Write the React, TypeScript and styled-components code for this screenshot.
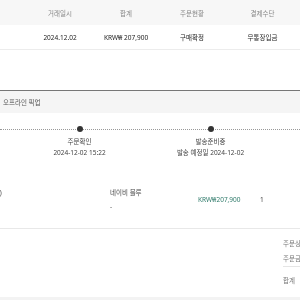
import {createGlobalStyle} from 'styled-components';
import styled from 'styled-components';

const GlobalStyle = createGlobalStyle`
	html, body {
		margin: 0;
		padding: 0;
		background: #fff;
		overflow: hidden;
	}
	body {
		font-family: 'Noto Sans', 'Noto Sans CJK KR', sans-serif;
		font-size: 6.5px;
		color: #333;
	}
`;

// own layer without an opaque background, so text gets grayscale antialiasing
const Page = styled.div`
	width: 300px;
	height: 300px;
	overflow: hidden;
	display: flex;
	flex-direction: column;
	will-change: transform;
`;

const TableRow = styled.div<{$head?: boolean}>`
	display: grid;
	grid-template-columns: 27px 66px 66px 66px 75px;
	align-items: center;
	height: ${p => (p.$head ? '25px' : '24px')};
	background: ${p => (p.$head ? '#f7f7f7' : 'transparent')};
	color: ${p => (p.$head ? '#888' : '#222')};
	border-bottom: ${p => (p.$head ? 'none' : '1px solid #ececec')};
`;

const Cell = styled.div`
	text-align: center;
	white-space: nowrap;
`;

const Section = styled.section`
	margin-top: 40px;
	border-top: 1px solid #777;
`;

const SectionTitle = styled.div`
	height: 22px;
	display: flex;
	align-items: center;
	padding-left: 3px;
	background: #f5f5f5;
	color: #555;
`;

const Timeline = styled.div`
	position: relative;
	display: flex;
	padding: 13px 0 0 14px;
	height: 38px;
`;

const Track = styled.div`
	position: absolute;
	left: 0;
	right: 0;
	top: 16px;
	border-top: 1px dotted #999;
`;

const Step = styled.div`
	position: relative;
	width: 131px;
	display: flex;
	flex-direction: column;
	align-items: center;
	color: #444;
`;

const Dot = styled.span`
	width: 6px;
	height: 6px;
	border-radius: 50%;
	background: #333;
	margin-bottom: 4px;
`;

const StepLabel = styled.div`
	line-height: 11px;
	white-space: nowrap;
`;

const ProductRow = styled.div`
	display: grid;
	grid-template-columns: 110px 88px 62px 1fr;
	align-items: center;
	height: 58px;
	margin-top: 6px;
	border-bottom: 1px solid #e8e8e8;
	color: #444;
`;

const Option = styled.div`
	display: flex;
	flex-direction: column;
	gap: 5px;
	padding-bottom: 1px;
`;

const NameTail = styled.div`
	margin-left: -4px;
	margin-top: -14px;
`;

const Price = styled.div`
	color: #2f7a6a;
`;

const Summary = styled.div`
	display: flex;
	flex-direction: column;
	padding: 7px 0 0 283px;
	color: #777;
	white-space: nowrap;
`;

const SummaryLine = styled.div<{$rule?: boolean}>`
	line-height: 15px;
	${p => (p.$rule ? 'border-bottom: 1px solid #e5e5e5; margin-bottom: 6px;' : '')}
`;

const Footer = styled.div`
	margin-top: auto;
	height: 3px;
	background: #f3f3f3;
`;

export default function App() {
	return (
		<Page>
			<GlobalStyle/>
			<TableRow $head>
				<Cell/>
				<Cell>거래일시</Cell>
				<Cell>합계</Cell>
				<Cell>주문현황</Cell>
				<Cell>결제수단</Cell>
			</TableRow>
			<TableRow>
				<Cell/>
				<Cell>2024.12.02</Cell>
				<Cell>KRW₩ 207,900</Cell>
				<Cell>구매확정</Cell>
				<Cell>무통장입금</Cell>
			</TableRow>
			<Section>
				<SectionTitle>오프라인 픽업</SectionTitle>
				<Timeline>
					<Track/>
					<Step>
						<Dot/>
						<StepLabel>주문확인</StepLabel>
						<StepLabel>2024-12-02 15:22</StepLabel>
					</Step>
					<Step>
						<Dot/>
						<StepLabel>발송준비중</StepLabel>
						<StepLabel>발송 예정일 2024-12-02</StepLabel>
					</Step>
				</Timeline>
			</Section>
			<ProductRow>
				<NameTail>0)</NameTail>
				<Option>
					<div>네이비 블루</div>
					<div>-</div>
				</Option>
				<Price>KRW₩207,900</Price>
				<div>1</div>
			</ProductRow>
			<Summary>
				<SummaryLine>주문상품 수</SummaryLine>
				<SummaryLine $rule>주문금액</SummaryLine>
				<SummaryLine>합계</SummaryLine>
			</Summary>
			<Footer/>
		</Page>
	);
}
